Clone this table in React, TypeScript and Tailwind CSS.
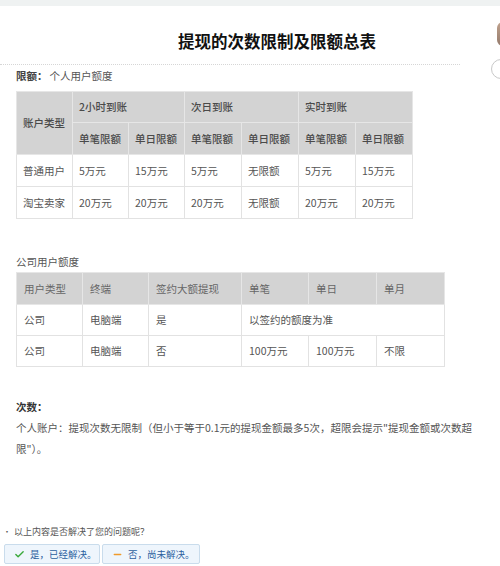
import { Check, Minus } from "lucide-react";

const font = { fontFamily: '"Noto Sans CJK SC", "Noto Sans", sans-serif' };

export default function App() {
  return (
    <div className="relative w-[500px] h-[566px] overflow-hidden bg-white text-[#555]" style={font}>
      {/* top strip */}
      <div className="h-[6px] bg-[#eff2f2]" />

      {/* right edge bits */}
      <div className="absolute left-[497px] top-[22px] w-[6px] h-[24px] rounded-l-full bg-gradient-to-b from-[#b08a70] to-[#7a5a48] opacity-80" />
      <div className="absolute left-[491px] top-[59px] w-[20px] h-[20px] rounded-full border border-[#c8c8c8] bg-white" />

      <div className="pl-[178px] pt-[24px] h-[58px] text-[16.5px] font-bold leading-[22px] text-[#111]">
        提现的次数限制及限额总表
      </div>

      <div className="w-[460px] border-t border-dotted border-[#d6d6d6]" />

      <div className="pl-[16px] pt-[3px] h-[26px] text-[10.5px] leading-[16px]">
        <span className="font-bold text-[#444]">限额：</span>
        <span className="ml-[2px]">个人用户额度</span>
      </div>

      {/* personal table */}
      <div className="pl-[16px]">
        <table className="border-collapse table-fixed text-[10.5px] w-[396px]">
          <colgroup>
            <col className="w-[56px]" />
            <col className="w-[56px]" />
            <col className="w-[56px]" />
            <col className="w-[57px]" />
            <col className="w-[57px]" />
            <col className="w-[57px]" />
            <col className="w-[57px]" />
          </colgroup>
          <tbody>
            <tr className="h-[31px] bg-[#d3d3d3] text-[#4a4a4a] font-medium">
              <td rowSpan={2} className="border border-[#e6e6e6] pl-[6px]">账户类型</td>
              <td colSpan={2} className="border border-[#e6e6e6] pl-[6px]">2小时到账</td>
              <td colSpan={2} className="border border-[#e6e6e6] pl-[6px]">次日到账</td>
              <td colSpan={2} className="border border-[#e6e6e6] pl-[6px]">实时到账</td>
            </tr>
            <tr className="h-[32px] bg-[#d3d3d3] text-[#4a4a4a] font-medium">
              {["单笔限额", "单日限额", "单笔限额", "单日限额", "单笔限额", "单日限额"].map((t, i) => (
                <td key={i} className="border border-[#e6e6e6] pl-[6px]">{t}</td>
              ))}
            </tr>
            {[
              ["普通用户", "5万元", "15万元", "5万元", "无限额", "5万元", "15万元"],
              ["淘宝卖家", "20万元", "20万元", "20万元", "无限额", "20万元", "20万元"],
            ].map((row, r) => (
              <tr key={r} className="h-[32px]">
                {row.map((t, i) => (
                  <td key={i} className="border border-[#e2e2e2] pl-[6px]">{t}</td>
                ))}
              </tr>
            ))}
          </tbody>
        </table>
      </div>

      <div className="pl-[16px] pt-[35px] h-[53px] text-[10.5px] leading-[16px]">公司用户额度</div>

      {/* company table */}
      <div className="pl-[16px]">
        <table className="border-collapse table-fixed text-[10.5px] w-[428px]">
          <colgroup>
            <col className="w-[66px]" />
            <col className="w-[66px]" />
            <col className="w-[93px]" />
            <col className="w-[67px]" />
            <col className="w-[68px]" />
            <col className="w-[68px]" />
          </colgroup>
          <tbody>
            <tr className="h-[32px] bg-[#d3d3d3] text-[#666]">
              {["用户类型", "终端", "签约大额提现", "单笔", "单日", "单月"].map((t, i) => (
                <td key={i} className="border border-[#e6e6e6] pl-[7px]">{t}</td>
              ))}
            </tr>
            <tr className="h-[31px]">
              <td className="border border-[#e2e2e2] pl-[7px]">公司</td>
              <td className="border border-[#e2e2e2] pl-[7px]">电脑端</td>
              <td className="border border-[#e2e2e2] pl-[7px]">是</td>
              <td colSpan={3} className="border border-[#e2e2e2] pl-[7px]">以签约的额度为准</td>
            </tr>
            <tr className="h-[31px]">
              {["公司", "电脑端", "否", "100万元", "100万元", "不限"].map((t, i) => (
                <td key={i} className="border border-[#e2e2e2] pl-[7px]">{t}</td>
              ))}
            </tr>
          </tbody>
        </table>
      </div>

      <div className="pl-[16px] pt-[29px] text-[10.5px] leading-[21px]">
        <div className="font-bold text-[#333]">次数：</div>
        <div className="w-[470px]">
          个人账户：提现次数无限制（但小于等于0.1元的提现金额最多5次，超限会提示"提现金额或次数超
          <br />
          限"）。
        </div>
      </div>

      {/* feedback */}
      <div className="absolute left-0 top-[525px] w-full">
        <div className="flex items-center gap-[3px] pl-[3px] text-[9px] leading-[14px] text-[#555]">
          <span className="text-[8px] leading-none">•</span>
          <span>以上内容是否解决了您的问题呢？</span>
        </div>
        <div className="flex gap-[2px] pl-[4px] pt-[5px]">
          <button className="flex items-center gap-[5px] w-[96px] h-[20px] pl-[9px] rounded-[2px] border border-[#c9dcec] bg-[#eef5fc] text-[9.5px] text-[#2c5f9e]">
            <Check size={11} strokeWidth={3} className="text-[#3aa93a]" />
            是，已经解决。
          </button>
          <button className="flex items-center gap-[5px] w-[98px] h-[20px] pl-[9px] rounded-[2px] border border-[#c9dcec] bg-[#eef5fc] text-[9.5px] text-[#2c5f9e]">
            <Minus size={11} strokeWidth={3} className="text-[#f09a2a]" />
            否，尚未解决。
          </button>
        </div>
      </div>
    </div>
  );
}
